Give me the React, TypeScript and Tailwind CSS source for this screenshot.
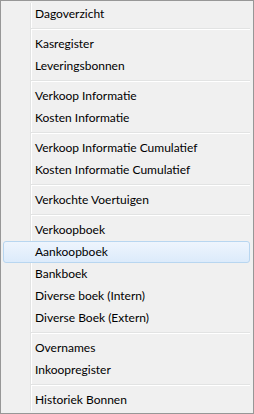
import React from 'react';

type Entry = { label: string; hover?: boolean } | 'sep';

const entries: Entry[] = [
  { label: 'Dagoverzicht' },
  'sep',
  { label: 'Kasregister' },
  { label: 'Leveringsbonnen' },
  'sep',
  { label: 'Verkoop Informatie' },
  { label: 'Kosten Informatie' },
  'sep',
  { label: 'Verkoop Informatie Cumulatief' },
  { label: 'Kosten Informatie Cumulatief' },
  'sep',
  { label: 'Verkochte Voertuigen' },
  'sep',
  { label: 'Verkoopboek' },
  { label: 'Aankoopboek', hover: true },
  { label: 'Bankboek' },
  { label: 'Diverse boek (Intern)' },
  { label: 'Diverse Boek (Extern)' },
  'sep',
  { label: 'Overnames' },
  { label: 'Inkoopregister' },
  'sep',
  { label: 'Historiek Bonnen' },
];

const App: React.FC = () => {
  return (
    <div className="w-[254px] h-[414px] border border-[#979797] bg-[#f0f0f0] p-[2px] font-['Lato',sans-serif] text-[12px] text-black relative">
      {/* gutter line */}
      <div className="absolute top-[2px] bottom-[2px] left-[29px] w-[2px] border-l border-[#e2e3e3] after:content-[''] after:block after:w-px after:h-full after:bg-white" />
      <div className="relative flex flex-col">
        {entries.map((e, i) =>
          e === 'sep' ? (
            <div key={i} className="h-[8px] flex flex-col justify-center pl-[28px] pr-[1px]">
              <div className="h-px bg-[#e2e3e3]" />
              <div className="h-px bg-white" />
            </div>
          ) : (
            <div
              key={i}
              className={
                e.hover
                  ? 'h-[22px] flex items-center pl-[31px] rounded-[3px] border border-[#b8d6f0] bg-gradient-to-b from-[#eef5fd] to-[#dcebfb] mr-[1px]'
                  : 'h-[22px] flex items-center pl-[32px]'
              }
            >
              <span className="leading-none">{e.label}</span>
            </div>
          )
        )}
      </div>
    </div>
  );
};

export default App;
